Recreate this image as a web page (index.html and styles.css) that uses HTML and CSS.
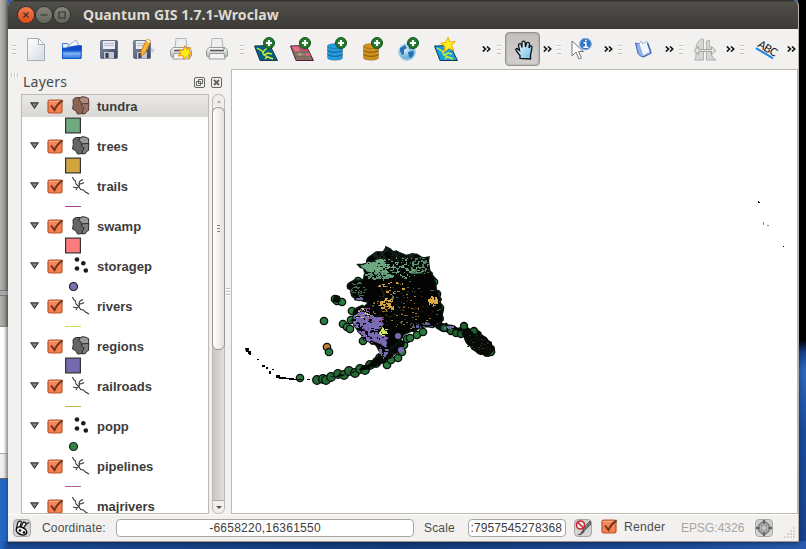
FILE: index.html
```html
<!DOCTYPE html>
<html lang="en">
<head>
<meta charset="utf-8">
<title>Quantum GIS 1.7.1-Wroclaw</title>
<link rel="stylesheet" href="styles.css">
</head>
<body>
<svg class="defs" aria-hidden="true">
<defs>
<linearGradient id="gPaper" x2="1" y2="1"><stop stop-color="#fff"/><stop offset="1" stop-color="#d5dae4"/></linearGradient>
<linearGradient id="gBlue" x2="0" y2="1"><stop stop-color="#0b49c4"/><stop offset=".35" stop-color="#0d50cf"/><stop offset=".6" stop-color="#7fb4f5"/><stop offset="1" stop-color="#2a74e0"/></linearGradient>
<linearGradient id="gDisk" x2="1" y2="1"><stop stop-color="#8a95ad"/><stop offset="1" stop-color="#323b5d"/></linearGradient>
<linearGradient id="gPrint" x2="0" y2="1"><stop stop-color="#fff"/><stop offset="1" stop-color="#a9aba9"/></linearGradient>
<linearGradient id="gHand" x2="1" y2="1"><stop stop-color="#fff"/><stop offset="1" stop-color="#67bfe8"/></linearGradient>
<linearGradient id="gOrange" x2="0" y2="1"><stop stop-color="#f58a5c"/><stop offset="1" stop-color="#fb7c48"/></linearGradient>
<radialGradient id="gGlobe" cx=".35" cy=".3"><stop stop-color="#e8f5ff"/><stop offset="1" stop-color="#78b6dd"/></radialGradient>
<symbol id="plus" viewBox="0 0 12 12"><circle cx="6" cy="6" r="5.500" fill="#1f7a2a" stroke="#1b4f20"/><path d="M6 3v6M3 6h6" stroke="#fff" stroke-width="2.200"/></symbol>
<symbol id="star" viewBox="0 0 16 16"><path d="M8 .8l2 4.800 5.200-.6-3.600 4 2.200 5-5-2-4.400 3.200.6-5.400L.6 6.800l5.200-1z" fill="#ffef18" stroke="#f5a800"/></symbol>
<symbol id="disk" viewBox="0 0 18 19"><rect x=".5" y=".5" width="17" height="18" rx="1" fill="url(#gDisk)" stroke="#6a7388"/><path d="M3 1h12v8H3z" fill="#e9edf2"/><path d="M4 3.500h10M4 5.500h10" stroke="#b6bdc9"/><path d="M4 12h10v6.500H4z" fill="#c3c8d0"/><path d="M5.500 13h3v5h-3z" fill="#343b50"/></symbol>
<symbol id="printer" viewBox="0 0 22 22"><path d="M6 .5h10l1 10H5z" fill="#eef0ef" stroke="#b4b6b4"/><path d="M3 9.500h16l2.500 3v5.500l-1.500 1H2l-1.500-1v-5.500z" fill="url(#gPrint)" stroke="#9b9d9b"/><path d="M4 12.500h14" stroke="#555" stroke-width="1.500"/><path d="M4 15.500h14l1 5.500H3z" fill="#f4f4f4" stroke="#9b9d9b"/><path d="M17 10.700h2" stroke="#5a5"/></symbol>
<symbol id="db" viewBox="0 0 16 18"><path d="M.5 3v12c0 3 15 3 15 0V3z" stroke="#0003"/><ellipse cx="8" cy="3" rx="7.500" ry="2.500" stroke="#0003"/><path d="M.5 7c0 3 15 3 15 0M.5 11c0 3 15 3 15 0" fill="none" stroke="#0006"/></symbol>
<symbol id="vmap" viewBox="0 0 24 16"><path d="M.5 1L16 .5l7.500 15H6z" stroke="#173a4e"/><path d="M3 3l5 3 2 4 4 2 5 2M9 7l4-4M10 10l4-2 4 1M13 12l-2 2" fill="none" stroke="#d2f02c" stroke-width="1.400"/></symbol>
<symbol id="more" viewBox="0 0 9 6"><path d="M.8 .5L3.500 3 .8 5.500M5 .5L7.700 3 5 5.500" fill="none" stroke="#111" stroke-width="1.600"/></symbol>
<symbol id="check" viewBox="0 0 17 17"><rect x="1" y="2" width="14" height="13" rx="1.800" fill="url(#gOrange)" stroke="#b5532f" stroke-width="1.200"/><path d="M2 3.500h12" stroke="#fbb394" stroke-width=".8"/><path d="M4 7.500l3.500 4.500Q10 6 15.700 2.300" fill="none" stroke="#6b3826" stroke-width="2"/></symbol>
<symbol id="poly" viewBox="0 0 19 19"><path d="M2 4q1-2.500 3.500-2.500H10l3 10-1 5q-2 2-5.500 1.500l-1.500-3-3.500-2 .8-4.500z" fill="var(--b)" stroke="var(--l)"/><path d="M9 2l2-1.300 3 .3 3.500 1.500.2 5-3 .8H11L10 6 7.800 4.500z" fill="var(--a)" stroke="var(--l)"/><path d="M10 9l2-1.300 5.800-.2-.3 7-2 1-1 2-3.500.5.5-3 1.500-3z" fill="var(--c)" stroke="var(--l)"/></symbol>
<symbol id="line" viewBox="0 0 19 19"><path d="M1.500 1l1 2.500L4.500 5l.5 3 3 2.500 1.500 3 3 .5 2 2 3.500 2M8 10.500l-2 1.500-4-1M6 12l-1 2M8.500 10l-.5-3 1-2 3-1.500M8 7.500l2 .5 3-1.500" fill="none" stroke="#343434" stroke-width="1.050"/></symbol>
<symbol id="point" viewBox="0 0 19 19"><g fill="#1c1c1c"><circle cx="6" cy="3.500" r="2.300"/><circle cx="12.300" cy="7.300" r="2.300"/><circle cx="6" cy="12.500" r="2.300"/><circle cx="14.800" cy="14.500" r="2.300"/></g></symbol>
</defs>
</svg>

<div class="desktop">
  <div class="behind"><div class="behind-top"></div><div class="behind-mid"></div><div class="behind-foot"></div></div>
  <main class="window">
    <header class="titlebar">
      <span class="wbtn close"><svg viewBox="0 0 16 16"><path d="M5.500 5.500l5 5M10.500 5.500l-5 5"/></svg></span>
      <span class="wbtn"><svg viewBox="0 0 16 16"><path d="M4.500 8h7"/></svg></span>
      <span class="wbtn"><svg viewBox="0 0 16 16"><path d="M5 5h6v6H5z"/></svg></span>
      <h1>Quantum GIS 1.7.1-Wroclaw</h1>
    </header>
    <nav class="toolbar">
      <i class="grip first"></i>
      <span class="tool page"><svg width="18" height="23" viewBox="0 0 18 23"><path d="M.5.5h11l6 6v16H.5z" fill="url(#gPaper)" stroke="#a5abb9"/><path d="M11.500.5v6h6z" fill="#fff" stroke="#a5abb9"/></svg></span>
      <span class="tool page"><svg width="20" height="20" viewBox="0 0 20 20"><path d="M.5 4.500h5l1.500 2h12v13H.5z" fill="#eaf2fd" stroke="#3b78cf"/><path d="M5 8l9-7 3.500 7z" fill="#fff" stroke="#8ea9cf"/><path d="M.5 9c6 1 9-3 19-2l-.5 12.500H.5z" fill="url(#gBlue)" stroke="#1059c8"/></svg></span>
      <span class="tool"><svg width="18" height="19"><use href="#disk"/></svg></span>
      <span class="tool page"><svg width="23" height="22" viewBox="0 0 23 22"><path d="M17 9l5 3-3 3z" fill="#ccd"/><use href="#disk" y="2" width="18" height="19"/><path d="M8 13L14 1l4 2-6 12-4 3z" fill="#ffb52b" stroke="#c77b15"/><path d="M14 1l4 2-1 2-4-2z" fill="#e3e3e8"/></svg></span>
      <span class="tool"><svg width="22" height="22" viewBox="0 0 22 22"><use href="#printer" width="22" height="22"/><path d="M15 7.500l1.500 4 4-2-1.500 4 3 2-3.500 1 1.500 4.500-4-2.500-2 3-1.500-4-4.500.5 3-3-2-3.500 4 1z" fill="#ffee14" stroke="#f08a10"/></svg></span>
      <span class="tool"><svg width="22" height="22"><use href="#printer"/></svg></span>
      <i class="grip mid"></i>
      <span class="tool"><svg width="24" height="24" viewBox="0 0 24 24"><use href="#vmap" y="8" width="24" height="16" fill="#07607f"/><use href="#plus" x="9" width="12" height="12"/></svg></span>
      <span class="tool"><svg width="24" height="24" viewBox="0 0 24 24"><path d="M.5 9L16 8.500l7.500 15H6z" fill="#8d6a62" stroke="#523"/><path d="M2 9.500h6l2.500 5H5z" fill="#ed6c87"/><path d="M10 9.500h6l2 4-6 1z" fill="#c54a6c"/><path d="M7 16.500l6-1 1 3H8z" fill="#b59a80"/><path d="M15 15.500l4-.5 1.500 4H16z" fill="#db5f7c"/><path d="M9 9l6 14M4 15.500h15M6 19.500h15" stroke="#6b6f62"/><use href="#plus" x="9" width="12" height="12"/></svg></span>
      <span class="tool"><svg width="24" height="24" viewBox="0 0 24 24"><use href="#db" x="1" y="6" width="16" height="18" fill="#259be0"/><use href="#plus" x="9" width="12" height="12"/></svg></span>
      <span class="tool"><svg width="24" height="24" viewBox="0 0 24 24"><use href="#db" x="1" y="6" width="16" height="18" fill="#d0921c"/><use href="#plus" x="9" width="12" height="12"/></svg></span>
      <span class="tool"><svg width="24" height="24" viewBox="0 0 24 24"><circle cx="9" cy="15" r="8.300" fill="url(#gGlobe)" stroke="#a9cde4"/><path d="M2 11l5-3 2 3-3 2v4l-2 1-2-4zM10 15l5-1 1 3-3 4-2-1zM11 8l3 3-3 1z" fill="#2671b5"/><use href="#plus" x="9" width="12" height="12"/></svg></span>
      <span class="tool"><svg width="24" height="24" viewBox="0 0 24 24"><use href="#vmap" y="8" width="24" height="16" fill="#179edb"/><use href="#star" x="6" y="-1" width="16" height="17"/></svg></span>
      <span class="more wide"><svg width="9" height="6"><use href="#more"/></svg></span>
      <i class="grip small"></i>
      <span class="pressed"><svg width="18" height="20" viewBox="0 0 18 20"><path d="M5 18.500v-3L1.500 11q-1.500-2 .5-2.500l2.500 2L3.500 5q.5-2 2.500-1l1 3.500L7 2.500Q8 0 10 2l.5 5 1-4q2-1.500 3 .5L14 8l1-2q2-.5 2 1.500L15.500 15v4z" fill="url(#gHand)" stroke="#111" stroke-width="1.300"/></svg></span>
      <span class="more"><svg width="9" height="6"><use href="#more"/></svg></span>
      <i class="grip small"></i>
      <span class="tool page"><svg width="22" height="22" viewBox="0 0 22 22"><path d="M1 3v15l4-4 3 7 2.500-1-3-6.500h5z" fill="#fff" stroke="#777"/><circle cx="14.500" cy="6" r="5.800" fill="#3276c9" stroke="#7fa8dc"/><path d="M12.500 4.800h2.300V9M12.300 9.200h5M14 2.500h1.800" stroke="#fff" stroke-width="1.500" fill="none"/></svg></span>
      <span class="more"><svg width="9" height="6"><use href="#more"/></svg></span>
      <i class="grip small"></i>
      <span class="tool page"><svg width="17" height="18" viewBox="0 0 17 18"><path d="M.5 3L4 4l5 12-3 .5-3-3z" fill="#8fb0ea" stroke="#3b66bb"/><path d="M4 4l2-3 2 3 4-3 4 10-8 5z" fill="#f1f5fd" stroke="#9cb4e0"/><path d="M12.500 3l3.500 10-8 4.200" fill="none" stroke="#3e64ba" stroke-width="1.400"/></svg></span>
      <span class="more"><svg width="9" height="6"><use href="#more"/></svg></span>
      <i class="grip small"></i>
      <span class="tool"><svg width="24" height="23" viewBox="0 0 24 23"><path d="M1.500 22c3-4 0-8 2-14 1-6 7-9 7-6v20zM13.500 22V3l3-1c0 10 1 17 6.500 20z" fill="#d6d6d4" stroke="#b0b0ae"/><path d="M5.500 8.500L1 12.500l4.500 4v-3h13v3l4.500-4-4.500-4v3h-13z" fill="#e4e4e2" stroke="#a5a5a3"/></svg></span>
      <span class="more"><svg width="9" height="6"><use href="#more"/></svg></span>
      <i class="grip small"></i>
      <span class="tool"><span class="abc">ABC</span></span>
      <span class="more"><svg width="9" height="6"><use href="#more"/></svg></span>
    </nav>
    <div class="content">
      <aside class="panel">
        <div class="panel-grip"></div>
        <div class="panel-head"><h2>Layers</h2>
          <svg width="11" height="11" viewBox="0 0 11 11"><rect x=".5" y=".5" width="10" height="10" rx="1.500"/><path d="M4.500 2.500h4v4h-4zM2.500 4.500h4v4h-4z"/></svg>
          <svg width="11" height="11" viewBox="0 0 11 11"><rect x=".5" y=".5" width="10" height="10" rx="1.500"/><path d="M3 3l5 5M8 3L3 8" stroke-width="2"/></svg>
        </div>
        <div class="panel-body">
          <ul class="tree" id="tree"></ul>
          <div class="scroll"><span class="up"></span><span class="thumb"><i></i></span><span class="down"></span></div>
        </div>
      </aside>
      <div class="splitter"><i></i></div>
      <section class="map"><svg id="map" width="566" height="444" viewBox="232 70 566 444"></svg></section>
    </div>
    <footer class="status">
      <span class="sbtn toggle"><svg width="16" height="16" viewBox="0 0 16 16"><path d="M2.500 8L4 2l2-1 1.500 1-2 6M6.500 8l3-6 2 .5.500 2-3 4M11 5l4-2.500" fill="#fff" stroke="#222" stroke-width="1.300"/><ellipse cx="7.500" cy="11" rx="5.500" ry="3.600" fill="#eee" stroke="#111" stroke-width="1.500" transform="rotate(25 7.500 11)"/><circle cx="6" cy="10.500" r="1.200"/><circle cx="10" cy="12.500" r="1.300"/></svg></span>
      <label class="l-coord">Coordinate:</label>
      <span class="field coord">-6658220,16361550</span>
      <label class="l-scale">Scale</label>
      <span class="field scale">:7957545278368</span>
      <span class="sbtn stop"><svg width="16" height="16" viewBox="0 0 16 16"><path d="M15 1l1 3-6 6-2-1z" fill="#777" stroke="#555"/><path d="M8 9l2 2q-3 5-8 4 4-1 6-6z" fill="#555"/><circle cx="5.500" cy="5" r="4" fill="#fff9" stroke="#cf2430" stroke-width="1.600"/><path d="M2.700 2.200l5.600 5.600" stroke="#cf2430" stroke-width="1.600"/></svg></span>
      <svg class="render-check" width="17" height="17"><use href="#check"/></svg>
      <label class="l-render">Render</label>
      <label class="l-epsg">EPSG:4326</label>
      <span class="sbtn crs"><svg width="16" height="16" viewBox="0 0 16 16" fill="none" stroke="#777" stroke-width="1.400"><circle cx="8" cy="8" r="5.800" fill="#bbb"/><path d="M8 .5L15.500 8 8 15.500.5 8z" stroke="#888"/><path d="M5.500 5.500h5v5h-5z" fill="#ccc" stroke="#999"/><path d="M8 0v4M8 12v4M0 8h4M12 8h4" stroke="#666" stroke-width="2"/></svg></span>
      <svg class="sizer" width="11" height="11" viewBox="0 0 11 11"><path d="M9 1h2M6 4h2M9 4h2M3 7h2M6 7h2M9 7h2M0 10h2M3 10h2M6 10h2M9 10h2" stroke="#d8d4d0" stroke-width="1.800"/></svg>
    </footer>
  </main>
</div>
<script src="app.js"></script>
</body>
</html>
```
FILE: styles.css
```css
* { box-sizing: border-box; }
body { margin: 0; width: 806px; height: 549px; overflow: hidden; font: 12px "Liberation Sans", Arial, sans-serif; color: #3c3c3c; }
.defs { position: absolute; width: 0; height: 0; }
.desktop { display: flex; width: 806px; height: 549px; background: linear-gradient(90deg, #2567c4 0, #1a4793 8px, #153b7b 400px, #1e4c9c 700px, #2a59ad) 0 541px / 806px 8px no-repeat, linear-gradient(#000 0, #000 340px, #17418e 353px, #2f66bd 370px, #1b4a9c 430px, #173f8b 549px) 798px 0 / 8px 549px no-repeat, #2466c4; }
.behind { width: 8px; flex: none; }
.behind-top { height: 327px; background: linear-gradient(#0000 0 290px, #777 290px 291px, #aaa 291px 295px, #777 295px 296px, #0000 296px), linear-gradient(90deg, #b4b3b0, #989795 60%, #6d6c69); border-bottom: 1px solid #888; }
.behind-mid { height: 126px; background: linear-gradient(90deg, #fff 40%, #bbb); }
.behind-foot { height: 26px; background: linear-gradient(90deg, #efeeec 40%, #aaa); border-top: 1px solid #aaa; border-bottom: 1px solid #666; }
.window { width: 791px; height: 542px; display: flex; flex-direction: column; background: #f2f1f0; border-right: 1px solid #b5b1ab; border-bottom: 1px solid #9b9892; border-radius: 6px 6px 0 0; overflow: hidden; box-shadow: 0 1px 4px #0007; }
.titlebar { height: 29px; flex: none; display: flex; align-items: center; padding-left: 10px; gap: 2px; background: linear-gradient(#33322f 0, #33322f 1px, #504f4a 2px, #3c3b37 28px); }
.wbtn { width: 16px; height: 16px; border-radius: 50%; background: linear-gradient(#85847b, #65645d); box-shadow: 0 0 0 1px #31302d; }
.wbtn svg { display: block; width: 16px; height: 16px; fill: none; stroke: #34332f; stroke-width: 1.200; }
.close { background: linear-gradient(#f47b50, #df4a16); }
.titlebar h1 { margin: 0 0 0 11px; font: 700 14px/28px "Noto Sans", sans-serif; color: #dfdbd2; white-space: nowrap; letter-spacing: .1px; }
.toolbar { height: 40px; flex: none; display: flex; align-items: center; overflow: hidden; }
.tool { width: 36px; flex: none; display: flex; align-items: center; justify-content: center; }
.page { padding-right: 2px; }
.tool svg, .more svg { flex: none; display: block; }
.grip { width: 13px; height: 9px; flex: none; background: repeating-linear-gradient(#cac6c1 0 1px, #fff 1px 2px, #0000 2px 4px) 5px 0 / 4px 9px no-repeat; }
.grip.first { width: 11px; background-position: 4px 0; }
.grip.small { width: 10px; background-position: 2px 0; }
.more { width: 15px; flex: none; display: flex; justify-content: center; }
.more.wide { width: 31px; justify-content: flex-end; padding-right: 4px; }
.pressed { width: 35px; height: 34px; flex: none; display: flex; align-items: center; justify-content: center; padding-left: 2px; padding-top: 2px; border: 1px solid #969391; border-radius: 4px; background: linear-gradient(#c2c1bf, #d1d0ce); box-shadow: inset 0 0 2px #888; }
.abc { margin-left: 2px; font: 11px/10px Lato, sans-serif; color: #111; letter-spacing: -.5px; border-bottom: 2px solid #1687ee; transform: rotate(31deg); }
.content { flex: none; height: 445px; display: flex; }
.panel { width: 217px; flex: none; display: flex; flex-direction: column; }
.panel-grip { height: 4px; margin: 4px 0 0 3px; width: 9px; background: repeating-linear-gradient(90deg, #cac6c1 0 1px, #fff 1px 2px, #0000 2px 3px); }
.panel-head { height: 17px; display: flex; align-items: center; gap: 6px; padding: 0 3px 7px 15px; }
.panel-head h2 { margin: 0 auto 0 0; font: 400 14px/16px "Noto Sans", sans-serif; color: #4a4a48; letter-spacing: .25px; }
.panel-head svg { fill: none; stroke: #676562; }
.panel-body { height: 420px; display: flex; gap: 3px; padding-left: 13px; }
.tree { width: 188px; height: 420px; overflow: hidden; margin: 0; padding: 0; list-style: none; background: #fff; border: 1px solid #bcb8b2; }
.layer { height: 40px; }
.name { height: 22px; display: flex; align-items: center; font: 700 13px/22px "Liberation Sans", Arial, sans-serif; color: #3c3c3c; padding-left: 8px; }
.name .arrow { width: 9px; height: 7px; margin: -2px 8px 0 0; }
.name .check { width: 17px; height: 17px; margin-right: 7px; }
.name .type { width: 19px; height: 19px; margin: 0 7px 1px 0; --a: #999; --b: #656565; --c: #7d7d7d; --l: #2c2c2c; }
.name span { padding-top: 2px; }
.selected .name { background: linear-gradient(#e9e8e6, #dad8d5); }
.selected .type { --a: #b28b7d; --b: #8b6355; --c: #9b7163; --l: #553d35; }
.legend { height: 18px; padding-left: 43px; display: flex; align-items: center; }
.legend svg { display: block; }
.scroll { width: 13px; height: 420px; display: flex; flex-direction: column; background: linear-gradient(90deg, #c9c7c4, #e0deda); border: 1px solid #bdb9b4; border-radius: 6px; }
.up, .down { height: 13px; flex: none; display: flex; align-items: center; justify-content: center; background: #f0efed; border-radius: 6px 6px 0 0; }
.up::after, .down::after { content: ""; border: 2.500px solid transparent; border-top: 0; border-bottom: 3px solid #aaa; }
.thumb { height: 243px; flex: none; border: 1px solid #9b9893; border-radius: 6px; margin: -1px -1px auto; background: linear-gradient(90deg, #fff, #e4e2df); display: flex; align-items: center; justify-content: center; }
.thumb i { width: 3px; height: 8px; background: repeating-linear-gradient(#888 0 1px, #0000 1px 3px); }
.down { border-radius: 0 0 6px 6px; border-top: 1px solid #aaa; }
.down::after { border: 3px solid transparent; border-bottom: 0; border-top: 3px solid #555; }
.splitter { width: 6px; flex: none; display: flex; align-items: center; justify-content: center; }
.splitter i { width: 4px; height: 8px; background: repeating-linear-gradient(#c3c0bb 0 1px, #fff 1px 2px, #0000 2px 3px); }
.map { width: 567px; flex: none; height: 445px; background: #fff; border: 1px solid #bcb8b2; overflow: hidden; }
.map svg { display: block; }
.status { height: 27px; flex: none; display: flex; align-items: center; border-top: 1px solid #fff; padding: 0 3px 1px 5px; color: #4c4c4c; }
.sbtn { width: 18px; height: 18px; flex: none; display: flex; align-items: center; justify-content: center; border: 1px solid #a8a5a1; border-radius: 4px; background: linear-gradient(#ccc, #d8d7d5); }
.l-coord { margin-left: 11px; width: 74px; letter-spacing: .15px; }
.field { height: 18px; flex: none; background: #fff; border: 1px solid #aaa7a3; border-radius: 4px; font-size: 12px; line-height: 17px; color: #3c3c3c; }
.coord { width: 298px; text-align: center; letter-spacing: .25px; }
.l-scale { margin-left: 10px; width: 44px; letter-spacing: .15px; }
.scale { width: 98px; text-align: right; padding-right: 3px; letter-spacing: .1px; }
.stop { margin-left: 8px; }
.render-check { margin: 0 0 2px 9px; flex: none; }
.l-render { margin: 0 0 2px 6px; width: 57px; letter-spacing: .2px; font-size: 12.200px; }
.l-epsg { color: #a8a6a3; width: 74px; }
.sizer { margin: 10px 0 0 auto; flex: none; }
```
FILE: app.js
```js
const layers = [
  ['tundra', 'poly', '#70a880'], ['trees', 'poly', '#d1a640'], ['trails', 'line', '#a93fae'],
  ['swamp', 'poly', '#ff7b7e'], ['storagep', 'point', '#7671b1'], ['rivers', 'line', '#c5e050'],
  ['regions', 'poly', '#7669ad'], ['railroads', 'line', '#b6b547'], ['popp', 'point', '#2e8542'],
  ['pipelines', 'line', '#b85a9f'], ['majrivers', 'line', '#5a9fb8']
];
const legend = {
  poly: c => `<rect x=".6" y="1.100" width="14.800" height="14.800" fill="${c}" stroke="#333" stroke-width="1.200"/>`,
  line: c => `<path d="M0 9.500h16" stroke="${c}"/>`,
  point: c => `<circle cx="8.500" cy="9.500" r="4" fill="${c}" stroke="#222" stroke-width="1.200"/>`
};
document.getElementById('tree').innerHTML = layers.map(([name, type, color], i) => `
  <li class="layer${i ? '' : ' selected'}">
    <div class="name">
      <svg class="arrow" viewBox="0 0 9 7"><path d="M1 .8h7L4.500 6z" fill="#888" stroke="#3c3c3c" stroke-width="1.200"/></svg>
      <svg class="check"><use href="#check"/></svg>
      <svg class="type"><use href="#${type}"/></svg><span>${name}</span>
    </div>
    <div class="legend"><svg width="16" height="18">${legend[type](color)}</svg></div>
  </li>`).join('');

// Seeded generator keeps the map texture identical on every load.
let seed = 71;
const rnd = () => (seed = (seed * 16807) % 2147483647) / 2147483647;

// Scatter of small specks inside an ellipse, merged in one path.
function specks(cx, cy, rx, ry, n, color, max = 3) {
  let d = '';
  for (let i = 0; i < n; i++) {
    const a = rnd() * 6.283, r = Math.sqrt(rnd());
    const x = Math.round(cx + Math.cos(a) * r * rx), y = Math.round(cy + Math.sin(a) * r * ry);
    const w = 1 + Math.floor(rnd() * max), h = 1 + Math.floor(rnd() * (max - 1));
    d += `M${x} ${y}h${w}v${h}h-${w}z`;
  }
  return `<path d="${d}" fill="${color}"/>`;
}

// Closed outline with a ragged edge through the given points.
function ragged(pts, amp) {
  let out = [];
  pts.forEach(([x, y], i) => {
    const [u, v] = pts[(i + 1) % pts.length];
    const n = Math.max(1, Math.round(Math.hypot(u - x, v - y) / 3));
    for (let k = 0; k < n; k++) {
      out.push(`${(x + (u - x) * k / n + (rnd() - .5) * amp).toFixed(1)} ${(y + (v - y) * k / n + (rnd() - .5) * amp).toFixed(1)}`);
    }
  });
  return `M${out.join('L')}z`;
}
const dot = (x, y, r = 3.700, c = '#2a7b3f') => `<circle cx="${x}" cy="${y}" r="${r}" fill="${c}" stroke="#080c08" stroke-width="1.300"/>`;
const land = ragged([[359,265],[366,263],[370,256],[375,252],[383,251],[387,247],[393,251],[405,255],[412,253],[420,256],[428,257],[429,267],[432,273],[435,281],[436,289],[440,295],[442,308],[442,321],[436,327],[424,327],[415,331],[405,334],[398,342],[390,349],[384,355],[378,350],[374,345],[365,341],[361,335],[356,328],[352,320],[353,312],[359,307],[367,305],[367,301],[356,299],[351,292],[347,285],[353,281],[364,279],[366,273]], 2.500);
let m = '';
[[335,299],[337,301],[342,302],[324,321],[343,324],[347,327],[350,329],[363,341],[300,378],[387,365],[391,360],[398,358],[402,352],[404,345],[407,339],[417,335],[423,332],[410,338],[352,311],[351,320],[351,286],[355,294],[358,281],[434,282],[437,294],[440,308]].forEach(p => { m += dot(...p); });
m += dot(337, 299, 3, '#0a100b') + dot(327, 347, 3.700, '#c57e38') + dot(329, 352);
[[317,380],[323,379],[326,380],[331,377],[338,374],[344,375],[349,371],[355,373],[360,369],[365,370],[370,365],[376,363],[380,358],[385,354],[390,350],[395,345]].forEach(p => { m += dot(p[0], p[1], 4.300, '#236a35'); });
m += `<path d="${ragged([[325,379],[350,373],[370,363],[384,350],[398,338],[405,342],[402,352],[393,356],[385,363],[368,369],[347,374]], 2.500)}" fill="#080a08"/>`;
m += `<path d="${ragged([[436,321],[447,323],[458,328],[465,326],[480,332],[493,344],[495,353],[486,357],[472,350],[461,336],[448,333],[436,328]], 2.500)}" fill="#070807"/>`;
[[444,328],[451,331],[456,333],[464,326],[474,331],[461,334],[491,352]].forEach(p => { m += dot(p[0], p[1], 3.500, '#1c652f'); });
m += `<path d="${ragged([[461,332],[472,332],[482,336],[494,350],[488,357],[475,351],[466,344]], 2)}" fill="#080a08"/>`;
m += specks(476, 342, 13, 9, 16, '#123d20', 2);
m += `<path d="${land}" fill="#030403" stroke="#0b1a10" stroke-width="1.500"/>`;
m += `<clipPath id="landClip"><path d="${land}"/></clipPath><g clip-path="url(#landClip)">`;
m += `<path d="${ragged([[361,266],[372,262],[384,258],[388,264],[402,269],[397,273],[378,274],[368,271]], 3)}" fill="#6ca880"/><path d="M410 257l17 1 2 15-18 1z" fill="#4f7b5d"/>`;
m += specks(378, 275, 14, 4, 70, '#609373', 3) + specks(402, 267, 27, 10, 120, '#69a17b', 3);
m += specks(408, 266, 23, 12, 170, '#070a08', 3) + specks(378, 267, 15, 8, 24, '#0d1510', 2) + specks(394, 253, 25, 6, 130, '#15201a', 3);
m += specks(358, 289, 9, 8, 45, '#3f6e50', 2) + specks(404, 305, 36, 25, 55, '#426d51', 2);
m += specks(391, 286, 14, 7, 18, '#d1a03a', 3) + specks(386, 303, 7, 7, 45, '#d9a741', 3) + specks(404, 308, 32, 20, 50, '#a97928', 2) + specks(432, 299, 4, 5, 25, '#e0ac45', 4);
m += specks(400, 306, 34, 20, 60, '#352611', 2);
m += '<path d="M353 317l9-7 8 7 7 0 7 7-8 10-9-6-11-2zM368 328l12 6 9 4-9 6-12-5z" fill="#776bb0"/>';
m += specks(365, 324, 15, 16, 100, '#7c6eb7', 4) + specks(370, 325, 17, 18, 35, '#a13d9b', 2) + specks(371, 323, 18, 19, 90, '#0b080d', 3);
m += specks(382, 331, 4, 4, 23, '#d5e567', 3) + specks(362, 313, 8, 5, 16, '#c6de50', 2) + specks(426, 325, 17, 3, 20, '#655e98', 3) + specks(359, 298, 3, 1, 8, '#776bb0') + '</g>';
[[366,327],[384,343],[398,336],[401,350]].forEach(p => { m += `<circle cx="${p[0]}" cy="${p[1]}" r="3" fill="#776db1"/>`; });
m += specks(383, 350, 4, 8, 24, '#786db3', 3) + specks(446, 327, 7, 2, 10, '#776db1', 3) + specks(483, 347, 8, 5, 10, '#382615', 2);
m += '<path d="M245 348h4v3h2v3h-3v-2h-2zM249 354h2v1h-2zM257 359h2v1h-2zM262 365h3v2h-3zM266 367h2v2h-2zM269 371h2v3h-2zM272 369h2v1h-2zM276 375h4v2h6v1h8v1h8v1h-13v-1h-10v-1h-3zM307 379h3v1h-3z"/>';
m += '<path d="M758 201h1v1h1v1h-2zM783 246h1v1h-1z"/><path d="M763 222h1v3h-1zM767 225h2v1h-2z" fill="#888"/>';
document.getElementById('map').innerHTML = m;
```
